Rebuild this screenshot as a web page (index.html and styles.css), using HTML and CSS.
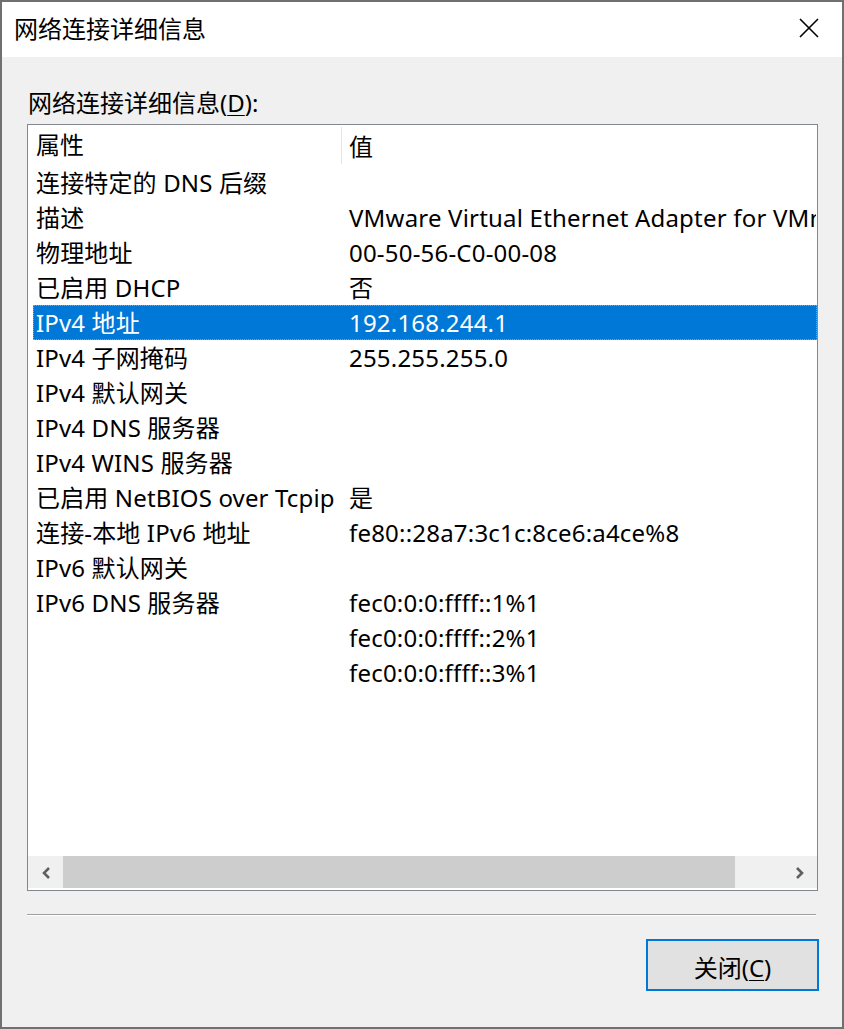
FILE: index.html
```html
<!DOCTYPE html>
<html lang="zh-CN">
<head>
<meta charset="utf-8">
<title>网络连接详细信息</title>
<link rel="stylesheet" href="styles.css">
</head>
<body>
<div class="window">
  <div class="titlebar">
    <span class="title">网络连接详细信息</span>
    <span class="close">
      <svg width="22" height="22" viewBox="0 0 22 22"><path d="M2 2 L20 20 M20 2 L2 20" stroke="#000" stroke-width="1.6" fill="none"/></svg>
    </span>
  </div>
  <div class="content">
    <div class="label">网络连接详细信息(<u>D</u>):</div>
    <div class="listview">
      <div class="header">
        <div class="hcol c1">属性</div>
        <div class="hcol c2">值</div>
      </div>
      <div class="rows">
        <div class="row"><div class="c1">连接特定的 DNS 后缀</div><div class="c2"></div></div>
        <div class="row"><div class="c1">描述</div><div class="c2">VMware Virtual Ethernet Adapter for VMnet8</div></div>
        <div class="row"><div class="c1">物理地址</div><div class="c2">00-50-56-C0-00-08</div></div>
        <div class="row"><div class="c1">已启用 DHCP</div><div class="c2">否</div></div>
        <div class="row selected"><div class="c1">IPv4 地址</div><div class="c2">192.168.244.1</div></div>
        <div class="row"><div class="c1">IPv4 子网掩码</div><div class="c2">255.255.255.0</div></div>
        <div class="row"><div class="c1">IPv4 默认网关</div><div class="c2"></div></div>
        <div class="row"><div class="c1">IPv4 DNS 服务器</div><div class="c2"></div></div>
        <div class="row"><div class="c1">IPv4 WINS 服务器</div><div class="c2"></div></div>
        <div class="row"><div class="c1">已启用 NetBIOS over Tcpip</div><div class="c2">是</div></div>
        <div class="row"><div class="c1">连接-本地 IPv6 地址</div><div class="c2">fe80::28a7:3c1c:8ce6:a4ce%8</div></div>
        <div class="row"><div class="c1">IPv6 默认网关</div><div class="c2"></div></div>
        <div class="row"><div class="c1">IPv6 DNS 服务器</div><div class="c2">fec0:0:0:ffff::1%1</div></div>
        <div class="row"><div class="c1"></div><div class="c2">fec0:0:0:ffff::2%1</div></div>
        <div class="row"><div class="c1"></div><div class="c2">fec0:0:0:ffff::3%1</div></div>
      </div>
      <div class="hscroll">
        <div class="arrow">
          <svg width="10" height="12" viewBox="0 0 10 12"><path d="M8 1 L3 6 L8 11" stroke="#606060" stroke-width="2.6" fill="none"/></svg>
        </div>
        <div class="thumb"></div>
        <div class="track"></div>
        <div class="arrow">
          <svg width="10" height="12" viewBox="0 0 10 12"><path d="M2 1 L7 6 L2 11" stroke="#606060" stroke-width="2.6" fill="none"/></svg>
        </div>
      </div>
    </div>
    <div class="separator"></div>
    <div class="buttons">
      <button class="btn">关闭(<u>C</u>)</button>
    </div>
  </div>
</div>
</body>
</html>
```

FILE: styles.css
```css
* { box-sizing: border-box; }
html, body {
  margin: 0;
  padding: 0;
  width: 844px;
  height: 1029px;
  overflow: hidden;
  background: #707070;
}
body {
  font-family: "Noto Sans", "Noto Sans CJK SC", sans-serif;
  font-size: 24px;
  color: #000;
}
.window {
  width: 844px;
  height: 1029px;
  border: 2px solid #707070;
  background: #f0f0f0;
  display: flex;
  flex-direction: column;
}
.titlebar {
  height: 55px;
  background: #fff;
  display: flex;
  align-items: center;
  justify-content: space-between;
  padding: 0 22px 0 12px;
}
.title {
  line-height: 30px;
  padding-bottom: 2px;
}
.close {
  display: flex;
  margin-top: -4px;
}
.content {
  flex: 1;
  padding: 31px 24px 0 25px;
  display: flex;
  flex-direction: column;
}
.label {
  line-height: 30px;
  padding-left: 1px;
  margin-bottom: 6px;
}
.label u, .btn u { text-underline-offset: 3px; text-decoration-thickness: 1px; }
.listview {
  height: 767px;
  border: 1px solid #828790;
  background: #fff;
  display: flex;
  flex-direction: column;
  overflow: hidden;
}
.header {
  height: 40px;
  display: flex;
  flex: none;
  padding-left: 5px;
}
.hcol {
  line-height: 40px;
  padding-top: 2px;
}
.header .c1 {
  border-right: 1px solid #e5e5e5;
  margin: 2px 0 1px;
  line-height: 36px;
  padding-top: 0;
}
.c1 {
  width: 309px;
  flex: none;
  padding-left: 3px;
  white-space: nowrap;
}
.c2 {
  flex: 1;
  padding-left: 8px;
  white-space: nowrap;
  overflow: hidden;
}
.header .c2 { padding-left: 7px; }
.rows {
  flex: 1;
  overflow: hidden;
}
.row {
  display: flex;
  height: 35px;
  line-height: 33px;
  margin-left: 5px;
  border: 1px solid transparent;
}
.row .c1 { padding-left: 2px; letter-spacing: 0.15px; }
.row .c2 { padding-left: 6px; letter-spacing: 0.2px; }
.row.selected {
  background: #0078d7;
  color: #fff;
  border: 1px dotted #ff8c00;
}
.hscroll {
  height: 32px;
  margin-bottom: 2px;
  background: #f0f0f0;
  display: flex;
  flex: none;
}
.arrow {
  width: 35px;
  display: flex;
  align-items: center;
  justify-content: center;
  padding-top: 1px;
}
.thumb {
  width: 672px;
  background: #cdcdcd;
}
.track { flex: 1; }
.separator {
  margin-top: 23px;
  margin-right: 2px;
  border-top: 1px solid #a0a0a0;
  border-bottom: 1px solid #fff;
}
.buttons {
  margin-top: 23px;
  display: flex;
  justify-content: flex-end;
  margin-right: -1px;
}
.btn {
  width: 173px;
  height: 52px;
  border: 2px solid #0078d7;
  background: #e1e1e1;
  font-family: "Noto Sans", "Noto Sans CJK SC", sans-serif;
  font-size: 24px;
  color: #000;
  padding: 2px 0 0;
}
```
